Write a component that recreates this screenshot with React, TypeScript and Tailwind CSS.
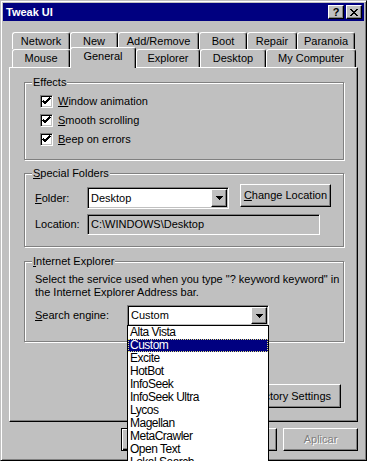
import type { ReactNode } from 'react';

// Win95 bevels
const raised =
  'border border-t-white border-l-white border-r-black border-b-black shadow-[inset_-1px_-1px_0_#808080]';
const sunken =
  'border border-t-[#808080] border-l-[#808080] border-r-white border-b-white shadow-[inset_1px_1px_0_#000,inset_-1px_-1px_0_#c0c0c0]';

const Arrow = () => (
  <svg width="7" height="4" viewBox="0 0 7 4" shapeRendering="crispEdges">
    <polygon points="0,0 7,0 3.5,4" fill="#000" />
  </svg>
);

const Check = () => (
  <svg width="9" height="9" viewBox="0 0 9 9" shapeRendering="crispEdges">
    <path d="M1 4 L3 6 L8 1" stroke="#000" strokeWidth="2" fill="none" />
  </svg>
);

const Tab = ({ label, className }: { label: string; className: string }) => (
  <div
    className={`flex items-center justify-center rounded-t-[3px] border-x border-t border-l-white border-t-white border-r-black bg-[#c0c0c0] shadow-[inset_-1px_0_0_#808080] ${className}`}
  >
    {label}
  </div>
);

const Group = ({
  title,
  className,
  children,
}: {
  title: ReactNode;
  className: string;
  children: ReactNode;
}) => (
  <div
    className={`flex flex-col border border-[#808080] shadow-[1px_1px_0_#fff,inset_1px_1px_0_#fff] ${className}`}
  >
    <span className="-mt-[7px] ml-[7px] self-start bg-[#c0c0c0] px-[1px] leading-[13px]">
      {title}
    </span>
    {children}
  </div>
);

const CheckRow = ({ letter, rest }: { letter: string; rest: string }) => (
  <div className="flex h-[13px] items-center gap-[5px]">
    <span className={`flex h-[13px] w-[13px] items-center justify-center bg-white ${sunken}`}>
      <Check />
    </span>
    <span className="leading-[13px]">
      <u>{letter}</u>
      {rest}
    </span>
  </div>
);

const Combo = ({
  value,
  className,
  children,
}: {
  value: string;
  className: string;
  children?: ReactNode;
}) => (
  <div className={`relative flex bg-white ${sunken} ${className}`}>
    <span className="flex-1 self-center pl-[3px] leading-[13px]">{value}</span>
    <span
      className={`my-[1px] mr-[1px] flex w-[16px] items-center justify-center bg-[#c0c0c0] ${raised}`}
    >
      <Arrow />
    </span>
    {children}
  </div>
);

const engines = [
  'Alta Vista',
  'Custom',
  'Excite',
  'HotBot',
  'InfoSeek',
  'InfoSeek Ultra',
  'Lycos',
  'Magellan',
  'MetaCrawler',
  'Open Text',
  'Lokal Search',
];

export default function App() {
  return (
    <div className="h-[461px] w-[367px] overflow-hidden bg-[#c0c0c0] font-['Liberation_Sans',Arial,sans-serif] text-[11px] text-black">
      <div className="flex h-full flex-col border border-t-[#c0c0c0] border-l-[#c0c0c0] border-r-black border-b-black p-[2px] shadow-[inset_1px_1px_0_#fff,inset_-1px_-1px_0_#808080]">
        {/* Title bar */}
        <div className="flex h-[18px] items-center bg-[#000080] pl-[3px] pr-[2px] font-bold text-white">
          <span>Tweak UI</span>
          <div className="ml-auto flex gap-[2px]">
            <span
              className={`flex h-[14px] w-[16px] items-center justify-center bg-[#c0c0c0] text-[11px] leading-none text-black ${raised}`}
            >
              ?
            </span>
            <span className={`flex h-[14px] w-[16px] items-center justify-center bg-[#c0c0c0] ${raised}`}>
              <svg width="8" height="7" viewBox="0 0 8 7" shapeRendering="crispEdges">
                <path d="M0.5 0 L7.5 7 M7.5 0 L0.5 7" stroke="#000" strokeWidth="1.6" />
              </svg>
            </span>
          </div>
        </div>

        <div className="mt-[11px] flex flex-col px-[6px]">
          {/* Tabs */}
          <div className="flex h-[17px] pl-[3px]">
            <Tab label="Network" className="w-[58px]" />
            <Tab label="New" className="w-[48px]" />
            <Tab label="Add/Remove" className="w-[81px]" />
            <Tab label="Boot" className="w-[48px]" />
            <Tab label="Repair" className="w-[50px]" />
            <Tab label="Paranoia" className="w-[58px]" />
          </div>
          <div className="flex h-[18px] items-start pl-[3px]">
            <Tab label="Mouse" className="h-[18px] w-[58px]" />
            <Tab label="General" className="relative z-10 -mt-[2px] h-[21px] w-[66px] pb-[3px]" />
            <Tab label="Explorer" className="h-[18px] w-[64px]" />
            <Tab label="Desktop" className="h-[18px] w-[66px]" />
            <Tab label="My Computer" className="h-[18px] w-[90px]" />
          </div>

          {/* Panel */}
          <div className={`flex h-[355px] flex-col pl-[14px] pr-[13px] pt-[14px] ${raised}`}>
            <Group title="Effects" className="h-[78px]">
              <div className="mt-[6px] flex flex-col gap-[6px] pl-[15px]">
                <CheckRow letter="W" rest="indow animation" />
                <CheckRow letter="S" rest="mooth scrolling" />
                <CheckRow letter="B" rest="eep on errors" />
              </div>
            </Group>

            <Group
              title={
                <>
                  <u>S</u>pecial Folders
                </>
              }
              className="mt-[13px] h-[74px]"
            >
              <div className="flex flex-col pl-[10px]">
                <div className="mt-[4px] flex items-start">
                  <span className="mt-[8px] w-[52px] leading-[13px]">
                    <u>F</u>older:
                  </span>
                  <Combo value="Desktop" className="mt-[3px] h-[22px] w-[142px]" />
                  <span
                    className={`ml-[11px] flex h-[23px] w-[91px] items-center justify-center bg-[#c0c0c0] ${raised}`}
                  >
                    <span>
                      <u>C</u>hange Location
                    </span>
                  </span>
                </div>
                <div className="mt-[5px] flex items-center">
                  <span className="w-[52px] leading-[13px]">Location:</span>
                  <span className={`flex h-[21px] w-[233px] items-center bg-[#c0c0c0] pl-[3px] ${sunken}`}>
                    C:\WINDOWS\Desktop
                  </span>
                </div>
              </div>
            </Group>

            <Group
              title={
                <>
                  <u>I</u>nternet Explorer
                </>
              }
              className="mt-[14px] h-[81px]"
            >
              <div className="flex flex-col pl-[10px]">
                <p className="mt-[5px] leading-[13px]">
                  Select the service used when you type "? keyword keyword" in
                  <br />
                  the Internet Explorer Address bar.
                </p>
                <div className="mt-[6px] flex items-center">
                  <span className="w-[92px] leading-[13px]">
                    <u>S</u>earch engine:
                  </span>
                  <Combo value="Custom" className="z-20 h-[21px] w-[142px]">
                    {/* Open dropdown list */}
                    <div className="absolute -left-[1px] top-full w-[142px] border border-black bg-white text-[12px] tracking-[-0.5px]">
                      {engines.map((name) => (
                        <div
                          key={name}
                          className={
                            name === 'Custom'
                              ? 'h-[13px] bg-[#000080] pl-[2px] leading-[13px] text-white outline-1 -outline-offset-1 outline-dotted outline-[#e0e080]'
                              : 'h-[13px] pl-[2px] leading-[13px]'
                          }
                        >
                          {name}
                        </div>
                      ))}
                    </div>
                  </Combo>
                </div>
              </div>
            </Group>

            <span
              className={`mr-[3px] mt-[42px] flex h-[24px] w-[141px] items-center justify-center self-end bg-[#c0c0c0] ${raised}`}
            >
              Restore Factory Settings
            </span>
          </div>

          {/* Dialog buttons */}
          <div className="mt-[6px] flex justify-end gap-[6px]">
            <span className="flex h-[23px] w-[75px] items-center justify-center border border-black shadow-[inset_1px_1px_0_#fff,inset_-1px_-1px_0_#000,inset_-2px_-2px_0_#808080]">
              Aceptar
            </span>
            <span className={`flex h-[23px] w-[75px] items-center justify-center ${raised}`}>
              Cancelar
            </span>
            <span
              className={`flex h-[23px] w-[75px] items-center justify-center text-[#808080] [text-shadow:1px_1px_0_#fff] ${raised}`}
            >
              Aplicar
            </span>
          </div>
        </div>
      </div>
    </div>
  );
}
